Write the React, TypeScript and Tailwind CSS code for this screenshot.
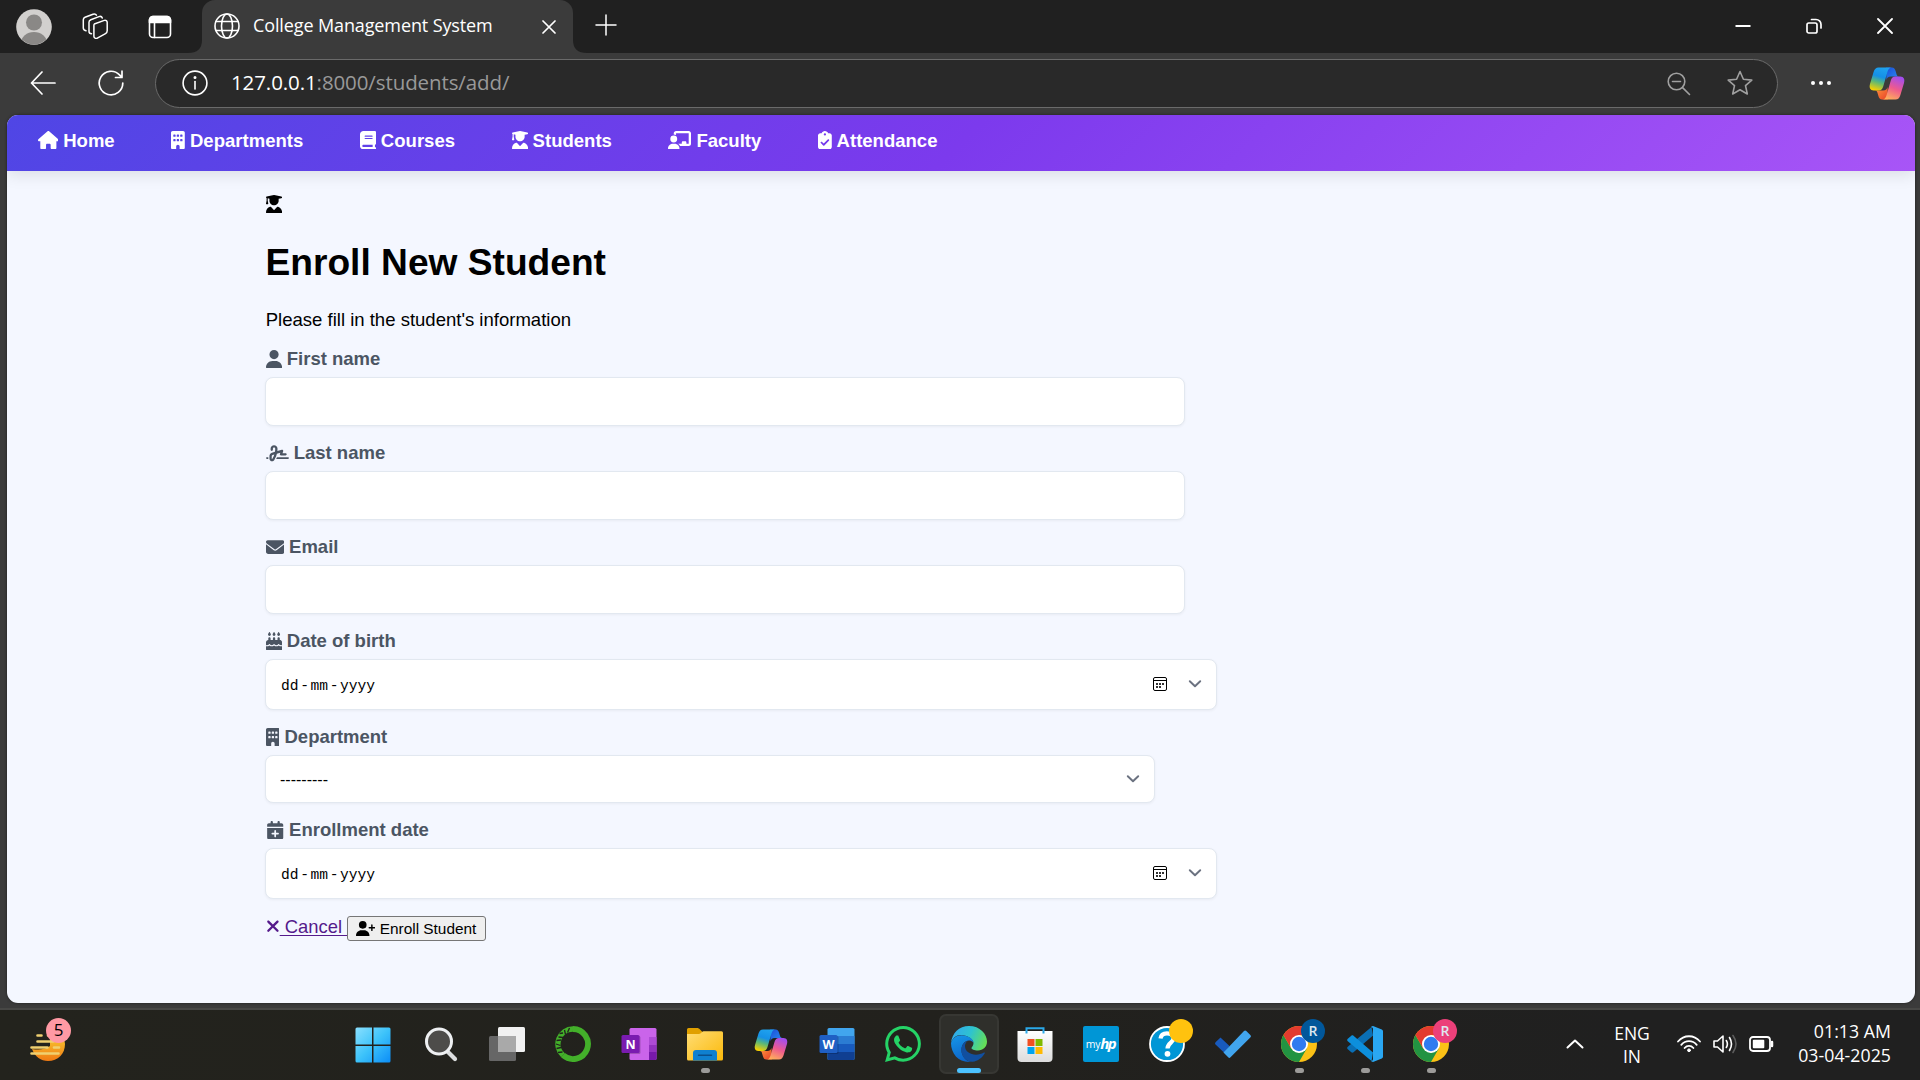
import React from "react";
import type { ComponentType, ReactNode } from "react";
import {
  FaHouse, FaBuilding, FaBook, FaUserGraduate, FaChalkboardUser, FaClipboardCheck,
  FaUser, FaSignature, FaEnvelope, FaCakeCandles, FaCalendarPlus, FaXmark, FaUserPlus,
} from "react-icons/fa6";

type Icon = ComponentType<{ className?: string }>;

const line = { fill: "none", stroke: "currentColor", strokeLinecap: "round" as const, strokeLinejoin: "round" as const };

function Copilot({ id, className }: { id: string; className: string }) {
  return (
    <svg viewBox="0 0 36 33" className={className}>
      <defs>
        <linearGradient id={id + "a"} x1="0.6" y1="0" x2="0.3" y2="1">
          <stop offset="0" stopColor="#1fa2ee" /><stop offset="0.4" stopColor="#1590e6" />
          <stop offset="0.65" stopColor="#5bb878" /><stop offset="1" stopColor="#f7d000" />
        </linearGradient>
        <linearGradient id={id + "b"} x1="0.7" y1="0" x2="0.3" y2="1">
          <stop offset="0" stopColor="#a24df0" /><stop offset="0.5" stopColor="#ee5a8e" /><stop offset="1" stopColor="#ffb05a" />
        </linearGradient>
        <linearGradient id={id + "c"} x1="0" y1="0" x2="1" y2="1">
          <stop offset="0" stopColor="#1b4fd8" /><stop offset="1" stopColor="#2a8cf0" />
        </linearGradient>
        <linearGradient id={id + "d"} x1="0" y1="0" x2="1" y2="1">
          <stop offset="0" stopColor="#ff9a3c" /><stop offset="1" stopColor="#e8402a" />
        </linearGradient>
      </defs>
      <path d="M17 0.5h6c2 0 3 1.6 3.6 3.6l1 3.4c.4 1.2 1 2 2.400 2h-8c-3 0-4 1.500-4.500 3.500z" fill={`url(#${id}c)`} />
      <path d="M19 32.500h-6c-2 0-3-1.600-3.600-3.600l-1-3.400c-.4-1.200-1-2-2.400-2h8c3 0 4-1.500 4.500-3.500z" fill={`url(#${id}d)`} />
      <path d="M9.500 .5h13.500c-2.500 0-3.700 1.500-4.600 4.500l-4.200 14.500c-.8 2.600-2 4-4.700 4H4.800C1 23.500 0 20.500 1 17L4.600 5C5.500 2 7 .5 9.500 .5z" fill={`url(#${id}a)`} />
      <path d="M26.500 32.500H13c2.500 0 3.700-1.500 4.600-4.500l4.200-14.500c.8-2.600 2-4 4.700-4h4.700c3.800 0 4.800 3 3.800 6.500L31.400 28c-.9 3-2.400 4.500-4.900 4.500z" fill={`url(#${id}b)`} />
    </svg>
  );
}

function TitleBar() {
  return (
    <div className="flex h-[53px] items-start bg-[#202020] text-white">
      <svg viewBox="0 0 36 36" className="ml-4 mt-[9px] size-9 shrink-0">
        <defs><clipPath id="avatar"><circle cx="18" cy="18" r="17.500" /></clipPath></defs>
        <circle cx="18" cy="18" r="17.800" fill="#d2d0ce" />
        <g clipPath="url(#avatar)" fill="#8a8886">
          <circle cx="18" cy="13.500" r="8" /><ellipse cx="18" cy="34" rx="13" ry="11" />
        </g>
      </svg>
      <svg viewBox="0 0 26 26" className="ml-[30px] mt-[13px] size-[26px] shrink-0" {...line} strokeWidth="1.500">
        <path d="M12.300 11l10-3.600c1.500-.5 2.900.4 2.900 2v8.400c0 1.300-.6 2.200-1.700 2.800l-8.200 4.500c-1.500.8-3.400 0-3.400-1.900V12.500c0-.8.1-1.300.4-1.500z" />
        <path d="M9.500 20.800c-1.200 0-2.500-.6-2.500-2.200V9.200c0-1.300.6-2 1.800-2.500L17 3.600c1.500-.5 2.800 0 3.300 1.400" />
        <path d="M4 17.800C2.500 17.500 1.300 16.800 1.300 15V6.800c0-1.300.5-2.100 1.700-2.600L11 1.200c1.500-.5 2.800-.2 3.400 1" />
      </svg>
      <svg viewBox="0 0 24 24" className="ml-[40px] mt-[14.500px] size-6 shrink-0" {...line} strokeWidth="1.600">
        <rect x="1.500" y="1.500" width="21" height="21" rx="3.500" />
        <path d="M1.500 7.500V5a3.500 3.500 0 0 1 3.500-3.500h14A3.500 3.500 0 0 1 22.500 5v2.500z" fill="currentColor" /><path d="M6.500 8v14.500" />
      </svg>
      <svg viewBox="0 0 14 53" className="ml-[16px] h-[53px] w-[14px] shrink-0"><path d="M0 53Q14 53 14 40V53z" fill="#3b3b3b" /></svg>
      <div className="flex h-[53px] w-[371px] shrink-0 items-start rounded-t-[13px] bg-[#3b3b3b]">
        <svg viewBox="0 0 26 26" className="ml-3 mt-[13px] size-[26px] shrink-0" {...line} strokeWidth="1.600">
          <circle cx="13" cy="13" r="12" /><ellipse cx="13" cy="13" rx="5.500" ry="12" /><path d="M2 8.500h22M2 17.500h22" />
        </svg>
        <div className="ml-[13px] mt-[11px] w-[270px] whitespace-nowrap font-['Open_Sans',sans-serif] text-[18px] leading-7 tracking-[-0.120px]">College Management System</div>
        <svg viewBox="0 0 14 14" className="ml-[19px] mt-5 size-[14px] shrink-0" {...line} strokeWidth="1.700"><path d="M1 1l12 12M13 1L1 13" /></svg>
      </div>
      <svg viewBox="0 0 14 53" className="h-[53px] w-[14px] shrink-0"><path d="M14 53Q0 53 0 40V53z" fill="#3b3b3b" /></svg>
      <svg viewBox="0 0 22 22" className="ml-[8px] mt-[14px] size-[22px] shrink-0" {...line} strokeWidth="1.500"><path d="M11 1v20M1 11h20" /></svg>
      <div className="ml-auto flex pt-[18px] pr-[27.500px] gap-[55px]">
        <svg viewBox="0 0 16 16" className="size-4" {...line} strokeLinecap="butt" strokeWidth="2"><path d="M.5 8h15" /></svg>
        <svg viewBox="0 0 16 16" className="size-4" {...line} strokeWidth="1.700">
          <rect x="1" y="5" width="10" height="10" rx="1.800" /><path d="M5.500 1.500h4.500a5 5 0 0 1 5 5V10" />
        </svg>
        <svg viewBox="0 0 16 16" className="size-4" {...line} strokeWidth="1.800"><path d="M1 1l14 14M15 1L1 15" /></svg>
      </div>
    </div>
  );
}

function Toolbar() {
  return (
    <div className="flex h-[62px] items-start bg-[#3b3b3b] pt-1.5 text-white">
      <svg viewBox="0 0 26 24" className="ml-[30px] mt-3 h-6 w-[26px] shrink-0" {...line} strokeWidth="1.700"><path d="M25 12H1.500M12 1L1.500 12L12 23" /></svg>
      <svg viewBox="0 0 26 26" className="ml-[42px] mt-[11px] size-[26px] shrink-0" {...line} strokeWidth="1.700"><path d="M24.800 13A11.800 11.800 0 1 1 21.500 4.900L23.700 7.200M24 1.200V7.500H17.500" /></svg>
      <div className="ml-[31px] flex h-[49px] w-[1623px] shrink-0 items-start rounded-full border border-[#6a6a6a] bg-[#292929]">
        <svg viewBox="0 0 26 26" className="ml-[26px] mt-[10px] size-[26px] shrink-0" {...line} strokeWidth="1.600">
          <circle cx="13" cy="13" r="11.900" /><path d="M13 11.500v7.500" /><circle cx="13" cy="7.600" r=".7" fill="currentColor" />
        </svg>
        <div className="ml-[23px] mt-[7px] whitespace-nowrap font-['Open_Sans',sans-serif] text-[20.500px] leading-[30px] tracking-[-0.1px] text-[#999]"><span className="text-white">127.0.0.1</span>:8000/students/add/</div>
        <svg viewBox="0 0 24 24" className="ml-auto mt-[12px] size-6 shrink-0 text-[#a0a0a0]" {...line} strokeWidth="1.600"><circle cx="9.500" cy="9.500" r="8.300" /><path d="M5.500 9.500h8M15.600 15.600l6.900 6.900" /></svg>
        <svg viewBox="0 0 26 26" className="ml-[36px] mr-[24px] mt-[10px] size-[26px] shrink-0 text-[#a0a0a0]" {...line} strokeWidth="1.600"><path d="M13 1.500l3.400 7.700 8.400.9-6.300 5.600 1.800 8.300L13 19.800 5.700 24l1.800-8.300L1.200 10.100l8.400-.9z" /></svg>
      </div>
      <svg viewBox="0 0 22 6" className="ml-[32px] mt-[21px] h-1.5 w-[22px] shrink-0" fill="currentColor"><circle cx="3" cy="3" r="2" /><circle cx="11" cy="3" r="2" /><circle cx="19" cy="3" r="2" /></svg>
      <Copilot id="tb" className="ml-[36.500px] mt-[8px] h-[33px] w-9 shrink-0" />
    </div>
  );
}

const NAV: [Icon, string, string][] = [
  [FaHouse, "Home", "w-[20.700px]"], [FaBuilding, "Departments", "w-[13.800px]"], [FaBook, "Courses", "w-[16.100px]"],
  [FaUserGraduate, "Students", "w-[16.100px]"], [FaChalkboardUser, "Faculty", "w-[23px]"], [FaClipboardCheck, "Attendance", "w-[13.800px]"],
];

function Nav() {
  return (
    <nav className="flex h-14 shrink-0 items-start gap-[56.500px] bg-[linear-gradient(135deg,#4f46e5,#7c3aed_50%,#a855f7)] pl-[30.500px] pt-[15px] text-[18.550px] font-bold leading-[22px] text-white shadow-[0_4px_15px_rgba(0,0,0,0.1)]">
      {NAV.map(([I, t, w]) => (
        <a key={t} className="flex gap-[5px]"><I className={"mt-px h-[18.400px] shrink-0 " + w} />{t}</a>
      ))}
    </nav>
  );
}

const BOX = "flex rounded-[8px] border border-[#e2e8f0] bg-white shadow-[0_1px_3px_rgba(0,0,0,0.05)]";

function Field({ icon: I, w, label, children }: { icon: Icon; w: string; label: string; children: ReactNode }) {
  return (
    <div className="mb-[17px]">
      <label className="mb-[7px] flex h-[21px] gap-[5px] pl-[0.700px] text-[18.500px] font-bold leading-[20px] text-[#4b5563]">
        <I className={"mt-[0.700px] h-[18.400px] shrink-0 " + w} />{label}
      </label>
      {children}
    </div>
  );
}

function Chevron() {
  return <svg viewBox="0 0 14 8" className="h-2 w-3.5" {...line} stroke="#6b7280" strokeWidth="1.900"><path d="M1.800 1.200L7 6.300L12.200 1.200" /></svg>;
}

function DateBox() {
  return (
    <div className={BOX + " h-[51px] w-[952px] items-center pr-[14px] pl-[15px]"}>
      <div className="flex pt-[3px] font-['Liberation_Mono',monospace] text-[14.600px] leading-5 text-black">
        <span>dd</span><span className="w-3 text-center">-</span><span>mm</span><span className="w-3 text-center">-</span><span>yyyy</span>
      </div>
      <svg viewBox="0 0 14 14" className="ml-auto mr-[21px] size-3.5" fill="none" stroke="#000">
        <rect x=".5" y=".5" width="13" height="13" rx="1.500" /><path d="M.5 3.500h13" />
        <path d="M3 7h2M6 7h2M9 7h2M3 10h2M6 10h2" strokeWidth="2" stroke="#333" />
      </svg>
      <Chevron />
    </div>
  );
}

function Form() {
  return (
    <main className="pl-[258px] pt-[24px] text-black">
      <FaUserGraduate className="ml-[0.700px] block h-[18.400px] w-[16.100px]" />
      <h1 className="mt-[27.600px] pl-[0.500px] text-[37.150px] font-bold leading-[42px]">Enroll New Student</h1>
      <p className="mt-[26px] mb-[18px] pl-[0.700px] text-[18.550px] leading-[22px]">Please fill in the student's information</p>
      <Field icon={FaUser} w="w-[16.100px]" label="First name"><div className={BOX + " h-[49px] w-[920px]"} /></Field>
      <Field icon={FaSignature} w="w-[23px]" label="Last name"><div className={BOX + " h-[49px] w-[920px]"} /></Field>
      <Field icon={FaEnvelope} w="w-[18.400px]" label="Email"><div className={BOX + " h-[49px] w-[920px]"} /></Field>
      <Field icon={FaCakeCandles} w="w-[16.100px]" label="Date of birth"><DateBox /></Field>
      <Field icon={FaBuilding} w="w-[13.800px]" label="Department">
        <div className={BOX + " h-12 w-[890px] items-center justify-between pr-[14px] pl-[14px] text-[16px]"}>
          <span className="pt-[3px]">---------</span><Chevron />
        </div>
      </Field>
      <Field icon={FaCalendarPlus} w="w-[18.400px]" label="Enrollment date"><DateBox /></Field>
      <div className="flex pl-[0.900px]">
        <a className="flex text-[18.400px] leading-[22px] text-[#551a8b]">
          <FaXmark className="mt-[1.500px] h-[18.400px] w-[13.800px] shrink-0" />
          <span className="whitespace-pre underline decoration-[1px] underline-offset-[2px]"> Cancel </span>
        </a>
        <button className="flex h-[25px] w-[139px] items-center rounded-[3px] border border-[#767676] bg-[#efefef] pl-[8px] text-[15.400px] leading-5">
          <FaUserPlus className="mr-[4.300px] h-[15.400px] w-[19.250px] shrink-0" /><span className="whitespace-nowrap pt-px">Enroll Student</span>
        </button>
      </div>
    </main>
  );
}

function Weather() {
  return (
    <div className="relative h-[70px] w-[342px] shrink-0">
      <svg viewBox="0 0 44 46" className="absolute left-[28px] top-[16px] h-[46px] w-11">
        <defs><linearGradient id="sun" x1="0" y1="0" x2="0" y2="1"><stop offset="0" stopColor="#f7c32e" /><stop offset="1" stopColor="#f07a13" /></linearGradient></defs>
        <path d="M4 23C7 31 13 35 20 35C30 35 37 28 37 18L36 12H22V20C17 24 10 24 4 23z" fill="url(#sun)" />
        <g stroke="#f0d070" strokeWidth="2.600" strokeLinecap="round"><path d="M9.500 9.500h4M20 9.500h10M9.500 15.500h16M3.500 21.500h16M26 21.500h5M3.500 27.500h27" /></g>
      </svg>
      <div className="absolute left-[46px] top-[8px] size-[25px] rounded-full bg-[#ff99a4] text-center font-['Open_Sans',sans-serif] text-[17px] leading-[24px] text-black">5</div>
    </div>
  );
}

function Chrome({ id }: { id: string }) {
  return (
    <svg viewBox="0 0 36 36" className="size-9">
      <defs><clipPath id={id}><circle cx="18" cy="18" r="18" /></clipPath></defs>
      <g clipPath={`url(#${id})`}>
        <rect width="36" height="36" fill="#fbc116" />
        <path d="M2.400 9L10.200 22.500L18 27L25.800 22.500L18 36H0V4z" fill="#229342" />
        <path d="M2.400 9L0 0H36V9H18L10.200 22.500z" fill="#e33b2e" />
      </g>
      <circle cx="18" cy="18" r="9" fill="#fff" /><circle cx="18" cy="18" r="7.200" fill="#2f7bf0" />
    </svg>
  );
}

function Office({ letter, shades, tile, wide }: { letter: string; shades: string[]; tile: string; wide: boolean }) {
  return (
    <svg viewBox="0 0 36 36" className="size-9">
      <rect x="8.500" y="2" width="27" height="32" rx="1.500" fill={shades[0]} />
      {wide
        ? <><path d="M8.500 10h27v8h-27z" fill={shades[1]} /><path d="M8.500 18h27v8h-27z" fill={shades[2]} /><path d="M8.500 26h27v6.500a1.500 1.500 0 0 1-1.500 1.500H10a1.500 1.500 0 0 1-1.500-1.500z" fill={shades[3]} /></>
        : <><path d="M28 11h7.500v8H28z" fill={shades[1]} /><path d="M28 19h7.500v7H28z" fill={shades[2]} /><path d="M28 26h7.500v6.500a1.500 1.500 0 0 1-1.500 1.500h-6z" fill={shades[3]} /></>}
      <rect x="2" y="10" width="17.500" height="18" rx="1.500" fill="#000" opacity=".2" />
      <rect x=".5" y="9" width="18" height="18" rx="1.500" fill={tile} />
      <text x="9.500" y="22.500" textAnchor="middle" fill="#fff" fontFamily="Open Sans, sans-serif" fontWeight="700" fontSize="12.500">{letter}</text>
    </svg>
  );
}

function TaskItem({ children, running, badge, letter }: { children: ReactNode; running?: boolean; badge?: string; letter?: string }) {
  return (
    <div className="relative flex h-[70px] w-[66px] shrink-0 justify-center pt-4">
      {children}
      {running && <div className="absolute bottom-[7px] left-[29px] h-[5px] w-[9px] rounded-full bg-[#9c9b99]" />}
      {badge && <div className={"absolute left-[35px] top-[9px] size-6 rounded-full text-center font-['Open_Sans',sans-serif] text-[14px] font-semibold leading-6 text-[#dfe8f0] " + badge}>{letter}</div>}
    </div>
  );
}

function Taskbar() {
  return (
    <div className="flex h-[70px] bg-[linear-gradient(90deg,#23231d,#22211d_50%,#202020_85%)] text-white">
      <Weather />
      <TaskItem>
        <svg viewBox="0 0 36 36" className="mr-[4px] mt-[0.500px] size-9">
          <defs><linearGradient id="win" x1="0" y1="0" x2="1" y2="1"><stop offset="0" stopColor="#8ae0ff" /><stop offset=".5" stopColor="#3dc3fa" /><stop offset="1" stopColor="#0b8df7" /></linearGradient></defs>
          <path d="M2 0.500h15V17.500H.5V2A1.500 1.500 0 0 1 2 .5zM18.500 .5H34A1.500 1.500 0 0 1 35.500 2V17.500H18.500zM.5 19H17V35.500H2A1.500 1.500 0 0 1 .5 34zM18.500 19H35.500V34A1.500 1.500 0 0 1 34 35.500H18.500z" fill="url(#win)" />
        </svg>
      </TaskItem>
      <TaskItem>
        <svg viewBox="0 0 36 36" className="size-9">
          <path d="M24.500 25.500L32 33" stroke="#dcdedf" strokeWidth="4.200" strokeLinecap="round" />
          <circle cx="16" cy="15.500" r="12.500" fill="#4d4c4a" stroke="#eef0f2" strokeWidth="3" />
        </svg>
      </TaskItem>
      <TaskItem>
        <svg viewBox="0 0 36 36" className="size-9">
          <rect x="9" y="1" width="27" height="25" rx="1.500" fill="#f1f1f1" />
          <rect x="0" y="10" width="27" height="25" rx="1.500" fill="#666" /><path d="M9 10h18v16H9z" fill="#a9a9a9" />
        </svg>
      </TaskItem>
      <TaskItem>
        <svg viewBox="0 0 36 36" className="size-9" fill="none">
          <path d="M18 3A15 15 0 1 1 8 29.200" stroke="#43b02a" strokeWidth="5.800" />
          <path d="M18 3A15 15 0 0 0 8 29.200" stroke="#43b02a" strokeWidth="5.400" />
          <path d="M14.500 2L12.500 6.500M9.500 4L10.500 8.500M8 7L4.500 7.500M3.500 11L8 11.500M1.500 14.500L6 14M1 18L5.500 19.500M1.500 22.500L6 21.500M3 26.500L7.500 26" stroke="#22231d" strokeWidth="1.300" />
        </svg>
      </TaskItem>
      <TaskItem><Office letter="N" shades={["#ca64ea", "#ae4bd5", "#9332bf", "#7719aa"]} tile="#7a1bb0" wide={false} /></TaskItem>
      <TaskItem running>
        <svg viewBox="0 0 36 36" className="size-9">
          <defs><linearGradient id="fold" x1="0" y1="0" x2="1" y2="1"><stop offset="0" stopColor="#ffdd75" /><stop offset="1" stopColor="#fbb90a" /></linearGradient></defs>
          <path d="M0 3.500A1.500 1.500 0 0 1 1.500 2H10c1.500 0 2 .5 3 1.500L15.500 6V12H0z" fill="#e0a000" />
          <path d="M0 8h10.500c2 0 3-.5 4-1.500S16 5.200 17.500 5.200H34.500A1.500 1.500 0 0 1 36 6.700V33A1.500 1.500 0 0 1 34.500 34.500H1.500A1.500 1.500 0 0 1 0 33z" fill="url(#fold)" />
          <path d="M6 34.500V27a3 3 0 0 1 3-3H27a3 3 0 0 1 3 3V34.500z" fill="#0f80d0" /><path d="M11.500 29.200h13" stroke="#0a4f8c" strokeWidth="1.500" strokeLinecap="round" />
        </svg>
      </TaskItem>
      <TaskItem><Copilot id="task" className="mt-[2.500px] h-[31px] w-[34px]" /></TaskItem>
      <TaskItem><Office letter="W" shades={["#41a5ee", "#2b7cd3", "#185abd", "#103f91"]} tile="#1f5fc4" wide /></TaskItem>
      <TaskItem>
        <svg viewBox="0 0 24 24" className="size-9" fill="#25d366">
          <path d="M17.472 14.382c-.297-.149-1.758-.867-2.030-.967-.273-.099-.471-.148-.670.150-.197.297-.767.966-.940 1.164-.173.199-.347.223-.644.075-.297-.150-1.255-.463-2.390-1.475-.883-.788-1.480-1.761-1.653-2.059-.173-.297-.018-.458.130-.606.134-.133.298-.347.446-.520.149-.174.198-.298.298-.497.099-.198.050-.371-.025-.520-.075-.149-.669-1.612-.916-2.207-.242-.579-.487-.500-.669-.510-.173-.008-.371-.010-.570-.010-.198 0-.520.074-.792.372-.272.297-1.040 1.016-1.040 2.479 0 1.462 1.065 2.875 1.213 3.074.149.198 2.096 3.200 5.077 4.487.709.306 1.262.489 1.694.625.712.227 1.360.195 1.871.118.571-.085 1.758-.719 2.006-1.413.248-.694.248-1.289.173-1.413-.074-.124-.272-.198-.570-.347z" />
          <path d="M12.050 0C5.500 0 .16 5.335.157 11.892c0 2.096.547 4.142 1.588 5.945L.057 24l6.305-1.654a11.900 11.900 0 0 0 5.683 1.448h.005c6.554 0 11.890-5.335 11.893-11.893A11.820 11.820 0 0 0 12.050 0zm0 21.785a9.900 9.900 0 0 1-5.400-1.600L2.900 21.200l1-3.700a9.880 9.880 0 1 1 8.150 4.285z" />
        </svg>
      </TaskItem>
      <TaskItem>
        <div className="absolute left-[3px] top-1 size-[60px] rounded-[7px] border-2 border-[#373733] bg-[#2f2f2b]" />
        <svg viewBox="0 0 36 36" className="relative size-9">
          <defs>
            <linearGradient id="e1" x1="0" y1=".3" x2="1" y2=".6"><stop offset="0" stopColor="#31a8ee" /><stop offset=".5" stopColor="#2ec3cf" /><stop offset="1" stopColor="#66e055" /></linearGradient>
            <linearGradient id="e2" x1=".3" y1="0" x2=".6" y2="1"><stop offset="0" stopColor="#1593e6" /><stop offset="1" stopColor="#0c62c7" /></linearGradient>
          </defs>
          <path d="M0 17C1 7 8 0 18 0C29 0 36 8 36 15.500C36 21 32 24.500 27 24.500C23 24.500 20.500 23.300 20.500 22C20.500 21.300 22.500 20 22.500 17C22.500 13 16 9 10 9C5 9 1.500 12.500 0 17z" fill="url(#e1)" />
          <path d="M0 17C1.500 12 6 9.300 10.500 9.300C17 9.300 22.500 13 22.500 17C22.500 17 21.500 14.500 18 14.500C14 14.500 10.500 18.500 10.500 24C10.500 30 15 35.500 20 35.900C8 37 0 28 0 17z" fill="url(#e2)" />
          <path d="M18 14.600C13.500 15.500 10.300 19 10.300 24C10.300 31 16 36.200 21.500 35.800C27 35 31.500 31.500 33.800 27.200C34 26.500 33.500 26.300 33 26.600C25 31 14 28 14 20C14 17.500 15.700 15.500 18 14.600z" fill="#114f9f" />
        </svg>
        <div className="absolute bottom-[7px] left-[21px] h-[5px] w-6 rounded-full bg-[#4cc2ff]" />
      </TaskItem>
      <TaskItem>
        <svg viewBox="0 0 36 36" className="size-9">
          <defs><linearGradient id="bag" x1="0" y1="0" x2="0" y2="1"><stop offset="0" stopColor="#fff" /><stop offset="1" stopColor="#dcdcdc" /></linearGradient></defs>
          <path d="M.5 5H35.500V32A4 4 0 0 1 31.500 36H4.500A4 4 0 0 1 .5 32z" fill="url(#bag)" />
          <path d="M9.500 7.500V2.200H26.500V7.500" fill="none" stroke="#2aa8e8" strokeWidth="2" />
          <path d="M10.500 13h7v7h-7z" fill="#f25022" /><path d="M18.500 13h7v7h-7z" fill="#7fba00" /><path d="M10.500 21h7v7h-7z" fill="#00a4ef" /><path d="M18.500 21h7v7h-7z" fill="#ffb900" />
        </svg>
      </TaskItem>
      <TaskItem>
        <div className="flex size-9 items-center justify-center rounded-[2px] bg-[#0096d6] font-['Open_Sans',sans-serif] text-[10.500px] leading-none text-white">
          <span className="tracking-[-0.2px]">my</span><span className="-mt-0.5 text-[15px] font-bold italic tracking-[-1.500px] pr-px">hp</span>
        </div>
      </TaskItem>
      <TaskItem badge="bg-[#ffc20e]">
        <svg viewBox="0 0 36 36" className="size-9">
          <circle cx="18" cy="18" r="17" fill="#0096d6" stroke="#fff" strokeWidth="1.800" />
          <path d="M11.500 12.500C12 8.500 15 7.300 18 7.300C22 7.300 24.500 9.500 24.500 12.500C24.500 16.500 18.500 17 18.500 22.500" fill="none" stroke="#fff" strokeWidth="4.200" /><circle cx="18.500" cy="27.800" r="2.900" fill="#fff" />
        </svg>
      </TaskItem>
      <TaskItem>
        <svg viewBox="0 0 36 36" className="size-9">
          <path d="M5.500 11.500L14.500 20L9.500 27L.8 18.800C-.2 17.800-.2 17 .8 16z" fill="#185abd" />
          <path d="M8.500 26.500L29 5C29.800 4.200 30.500 4.200 31.300 5L35.300 9C36.200 9.900 36.200 10.600 35.300 11.500L15.500 31.300C14.700 32.100 14 32.100 13.200 31.300z" fill="#41a5ee" />
        </svg>
      </TaskItem>
      <TaskItem running badge="bg-[#01579b]" letter="R"><Chrome id="c1" /></TaskItem>
      <TaskItem running>
        <svg viewBox="0 0 36 36" className="size-9">
          <path d="M26 9.500L6.500 26.300C5.900 26.900 5 26.900 4.300 26.300L.8 23.300C0 22.500 0 21.600 .8 20.800L24.500 1z" fill="#0a6fb5" />
          <path d="M26 26.500L6.500 9.700C5.900 9.100 5 9.100 4.300 9.700L.8 12.700C0 13.500 0 14.400 .8 15.200L24.500 35z" fill="#0d8fdc" />
          <path d="M26 0L34.800 3.600C35.600 4 36 4.500 36 5.300V30.700C36 31.500 35.600 32 34.800 32.400L26 36C25 35.800 24.300 35.300 23.800 34.700C25 35.200 26 34.500 26 33V3C26 1.500 25 .8 23.800 1.300C24.500 .5 25.200 0 26 0z" fill="#2aa7f2" />
        </svg>
      </TaskItem>
      <TaskItem running badge="bg-[#ec407a]" letter="R"><Chrome id="c2" /></TaskItem>

      <svg viewBox="0 0 18 10" className="ml-[102px] mt-[29px] h-2.5 w-[18px] shrink-0" {...line} strokeWidth="2"><path d="M1.500 8.500L9 1.500L16.500 8.500" /></svg>
      <div className="ml-[22px] mt-[12px] w-[52px] shrink-0 text-center font-['Open_Sans',sans-serif] text-[17.500px] leading-[23px] tracking-[-0.1px]">ENG<br />IN</div>
      <svg viewBox="0 0 24 18" className="ml-[19px] mt-[25px] h-[18px] w-6 shrink-0" {...line} strokeWidth="1.800">
        <path d="M1 6.500C7-.5 17-.5 23 6.500M4.300 9.800C8.500 5 15.500 5 19.700 9.800M7.600 13C10 10.200 14 10.200 16.400 13" /><circle cx="12" cy="15.300" r="1.400" fill="currentColor" strokeWidth="1" />
      </svg>
      <svg viewBox="0 0 25 20" className="ml-[12px] mt-[24px] h-5 w-[25px] shrink-0" {...line} strokeWidth="1.600">
        <path d="M1 7H4.500L10 2V18L4.500 13H1zM13.300 6.500Q15.500 10 13.300 13.500M16.500 3.500Q20.500 10 16.500 16.500" /><path d="M20 1.500Q26 10 20 18.500" stroke="#5c5c5c" />
      </svg>
      <svg viewBox="0 0 25 16" className="ml-[11px] mt-[26px] h-4 w-[25px] shrink-0" {...line} strokeWidth="1.800">
        <rect x="1" y="1" width="20" height="14" rx="3" /><rect x="3.800" y="3.800" width="11.500" height="8.500" rx="1" fill="currentColor" stroke="none" /><path d="M23 6v4" strokeWidth="2.500" />
      </svg>
      <div className="ml-auto mr-[29px] mt-[9px] text-right font-['Open_Sans',sans-serif] text-[17.700px] leading-6 tracking-[0.050px] whitespace-nowrap">01:13 AM<br />03-04-2025</div>
    </div>
  );
}

export default function App() {
  return (
    <div className="flex h-[1080px] w-[1920px] flex-col overflow-hidden bg-[#3b3b3b] font-['Liberation_Sans',Arial,sans-serif]">
      <TitleBar />
      <Toolbar />
      <div className="ml-[7px] flex h-[888px] w-[1908px] flex-col overflow-hidden rounded-[11px] bg-[#f4f7ff] shadow-[0_0_3px_rgba(0,0,0,0.5)]">
        <Nav />
        <Form />
      </div>
      <div className="mt-[5px] h-0.5 bg-[#474745]" />
      <Taskbar />
    </div>
  );
}
